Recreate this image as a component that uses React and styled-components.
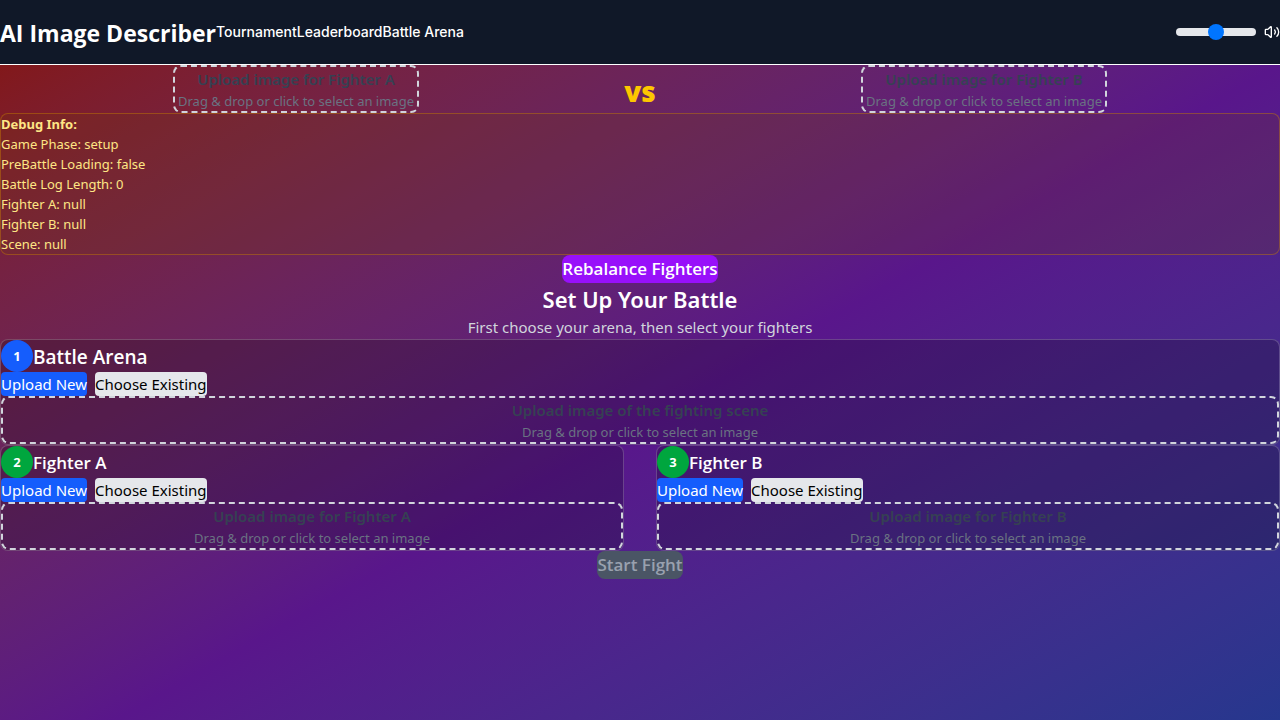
import React, { useState } from "react";
import styled, { createGlobalStyle } from "styled-components";
import { Volume2 } from "lucide-react";

const headingFont = `"Open Sans", "Noto Sans", sans-serif`;

const GlobalStyle = createGlobalStyle`
  *, *::before, *::after { box-sizing: border-box; }
  body {
    margin: 0;
    background: #101828;
    font-family: "Noto Sans", "Open Sans", sans-serif;
    font-size: 15px;
    line-height: 24px;
    color: #ffffff;
  }
  h1, h2, h3, p { margin: 0; }
  button { padding: 0; border: 0; font: inherit; cursor: pointer; }
`;

const Header = styled.header`
  display: flex;
  align-items: center;
  justify-content: space-between;
  height: 65px;
  background: #101828;
  border-bottom: 1px solid #ffffff;
`;

const HeaderGroup = styled.div`
  display: flex;
  align-items: center;
  gap: ${({ $gap }) => $gap || 0}px;
`;

const Brand = styled.h1`
  padding-top: 2px;
  font-family: ${headingFont};
  font-size: 23px;
  line-height: 32px;
  font-weight: 700;
`;

const Nav = styled.nav`
  display: flex;
`;

const NavLink = styled.a`
  font-family: Inter, sans-serif;
  font-size: 14px;
  line-height: 20px;
  font-weight: 500;
  color: #ffffff;
  text-decoration: none;
`;

const VolumeSlider = styled.input`
  appearance: none;
  width: 80px;
  height: 8px;
  margin: 0;
  border-radius: 8px;
  background: #e5e7eb;
  &::-webkit-slider-thumb {
    appearance: none;
    width: 16px;
    height: 16px;
    border-radius: 50%;
    background: #0075ff;
  }
`;

const Page = styled.main`
  min-height: 100vh;
  background: linear-gradient(to bottom right in oklab, #82181a, #59168b, #1c398e);
`;

const Versus = styled.section`
  display: grid;
  grid-template-columns: 1fr auto 1fr;
  gap: 32px;
  align-items: center;
  justify-items: center;
`;

const VersusLabel = styled.div`
  width: 32px;
  padding-top: 4px;
  font-size: 28px;
  line-height: 36px;
  font-weight: 900;
  text-align: center;
  color: #fdc700;
`;

const Zone = styled.label`
  display: block;
  min-width: 246px;
  border: 2px dashed #d1d5dc;
  border-radius: 8px;
  text-align: center;
  cursor: pointer;
`;

const ZoneTitle = styled.span`
  display: block;
  font-size: 15px;
  line-height: 24px;
  font-weight: 600;
  color: #364153;
`;

const ZoneHint = styled.span`
  display: block;
  font-size: 13px;
  line-height: 20px;
  color: #6a7282;
`;

const DebugPanel = styled.section`
  border: 1px solid rgba(208, 135, 0, 0.4);
  border-radius: 8px;
  background: rgba(115, 62, 10, 0.2);
  font-size: 13px;
  line-height: 20px;
  color: #fee685;
`;

const Centered = styled.div`
  display: flex;
  flex-direction: column;
  align-items: center;
`;

const ActionButton = styled.button`
  border-radius: 8px;
  font-family: ${headingFont};
  font-size: 17px;
  line-height: 28px;
  font-weight: 600;
  color: #ffffff;
  background: #9810fa;
  &:disabled {
    color: #99a1af;
    background: #4a5565;
    cursor: not-allowed;
  }
`;

const SetupTitle = styled.h2`
  font-size: 22px;
  line-height: 32px;
  font-weight: 600;
`;

const SetupText = styled.p`
  color: #d1d5dc;
`;

const Panel = styled.section`
  border: 1px solid rgba(255, 255, 255, 0.2);
  border-radius: 8px;
  background: rgba(0, 0, 0, 0.2);
`;

const PanelHeader = styled.div`
  display: flex;
  align-items: center;
`;

const Step = styled.span`
  display: flex;
  align-items: center;
  justify-content: center;
  width: 32px;
  height: 32px;
  border-radius: 50%;
  font-size: 13px;
  font-weight: 700;
  background: ${({ $tone }) => ($tone === "blue" ? "#155dfc" : "#00a63e")};
`;

const PanelTitle = styled.h3`
  padding-top: 2px;
  font-family: ${headingFont};
  font-size: ${({ $large }) => ($large ? 19 : 17)}px;
  line-height: 28px;
  font-weight: 600;
`;

const Choices = styled.div`
  display: flex;
  gap: 8px;
`;

const Choice = styled.button`
  border-radius: 4px;
  color: ${({ $active }) => ($active ? "#ffffff" : "#000000")};
  background: ${({ $active }) => ($active ? "#155dfc" : "#e5e7eb")};
`;

const Fighters = styled.div`
  display: grid;
  grid-template-columns: 1fr 1fr;
  gap: 32px;
`;

const DropZone = ({ title }) => (
  <Zone>
    <ZoneTitle>{title}</ZoneTitle>
    <ZoneHint>Drag &amp; drop or click to select an image</ZoneHint>
    <input type="file" accept="image/*" hidden />
  </Zone>
);

const SetupPanel = ({ step, tone, title, large, upload }) => {
  const [mode, setMode] = useState("upload");
  return (
    <Panel>
      <PanelHeader>
        <Step $tone={tone}>{step}</Step>
        <PanelTitle $large={large}>{title}</PanelTitle>
      </PanelHeader>
      <Choices>
        <Choice type="button" $active={mode === "upload"} onClick={() => setMode("upload")}>Upload New</Choice>
        <Choice type="button" $active={mode === "existing"} onClick={() => setMode("existing")}>Choose Existing</Choice>
      </Choices>
      <DropZone title={upload} />
    </Panel>
  );
};

export default function App() {
  return (
    <>
      <GlobalStyle />
      <Header>
        <HeaderGroup>
          <Brand>AI Image Describer</Brand>
          <Nav>
            <NavLink href="#tournament">Tournament</NavLink>
            <NavLink href="#leaderboard">Leaderboard</NavLink>
            <NavLink href="#battle">Battle Arena</NavLink>
          </Nav>
        </HeaderGroup>
        <HeaderGroup $gap={8}>
          <VolumeSlider type="range" min="0" max="100" defaultValue="50" aria-label="Volume" />
          <Volume2 size={16} />
        </HeaderGroup>
      </Header>
      <Page>
        <Versus>
          <DropZone title="Upload image for Fighter A" />
          <VersusLabel>vs</VersusLabel>
          <DropZone title="Upload image for Fighter B" />
        </Versus>
        <DebugPanel>
          <strong>Debug Info:</strong>
          <p>Game Phase: setup</p>
          <p>PreBattle Loading: false</p>
          <p>Battle Log Length: 0</p>
          <p>Fighter A: null</p>
          <p>Fighter B: null</p>
          <p>Scene: null</p>
        </DebugPanel>
        <Centered>
          <ActionButton type="button">Rebalance Fighters</ActionButton>
          <SetupTitle>Set Up Your Battle</SetupTitle>
          <SetupText>First choose your arena, then select your fighters</SetupText>
        </Centered>
        <SetupPanel step="1" tone="blue" title="Battle Arena" large upload="Upload image of the fighting scene" />
        <Fighters>
          <SetupPanel step="2" tone="green" title="Fighter A" upload="Upload image for Fighter A" />
          <SetupPanel step="3" tone="green" title="Fighter B" upload="Upload image for Fighter B" />
        </Fighters>
        <Centered>
          <ActionButton type="button" disabled>Start Fight</ActionButton>
        </Centered>
      </Page>
    </>
  );
}
